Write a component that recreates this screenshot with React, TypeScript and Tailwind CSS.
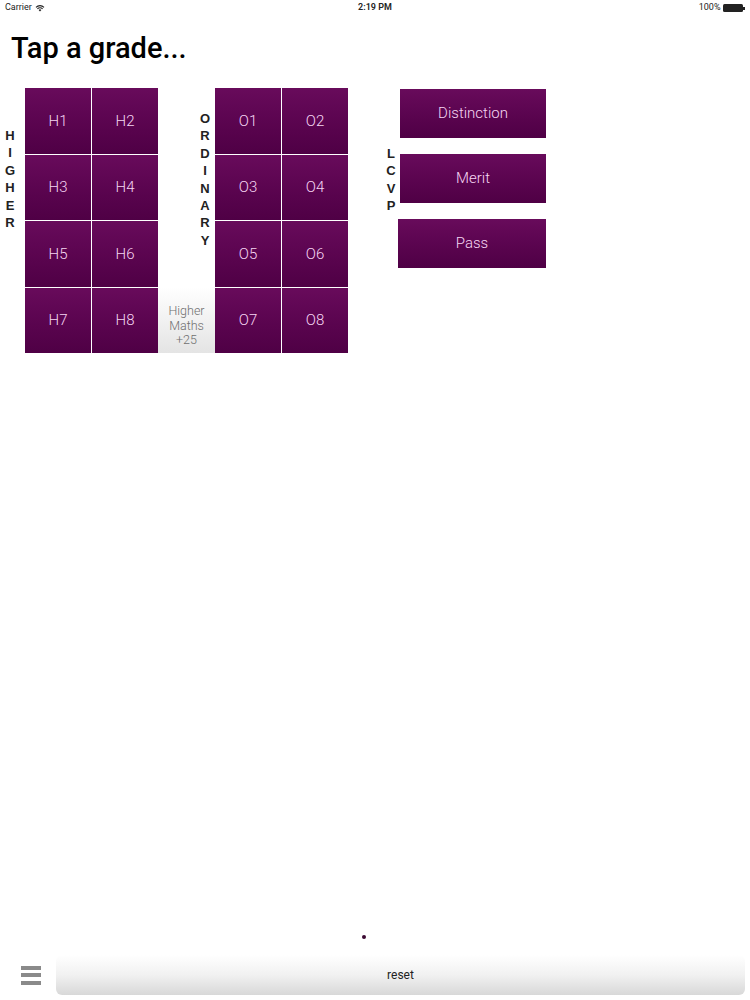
import React from 'react';

const higher = ['H1', 'H2', 'H3', 'H4', 'H5', 'H6', 'H7', 'H8'];
const ordinary = ['O1', 'O2', 'O3', 'O4', 'O5', 'O6', 'O7', 'O8'];

const Cell: React.FC<{ label: string }> = ({ label }) => (
  <div className="h-[65.5px] flex items-center justify-center bg-gradient-to-b from-[#680b5b] to-[#4f0045] text-[#f6d6f3] text-[15px] font-light">
    {label}
  </div>
);

const Vertical: React.FC<{ word: string }> = ({ word }) => (
  <div
    className="flex flex-col items-center text-[13px] font-bold leading-[17.4px] text-[#222]"
    style={{ fontFamily: '"Liberation Sans", Arial, sans-serif' }}
  >
    {word.split('').map((ch, i) => (
      <span key={i}>{ch}</span>
    ))}
  </div>
);

export default function App() {
  return (
    <div
      className="min-h-[1000px] w-[750px] bg-white flex flex-col"
      style={{ fontFamily: 'Roboto, "Liberation Sans", sans-serif' }}
    >
      {/* status bar */}
      <div className="h-[16px] px-[5px] flex items-center justify-between text-[9px] text-[#222]">
        <div className="flex items-center gap-[3px] w-[120px]">
          <span>Carrier</span>
          <svg width="10" height="8" viewBox="0 0 10 8">
            <path d="M5 7.5 L3.6 6 A2 2 0 0 1 6.4 6 Z" fill="#222" />
            <path d="M2.4 4.8 A3.6 3.6 0 0 1 7.6 4.8" stroke="#222" strokeWidth="1.1" fill="none" />
            <path d="M1 3.3 A5.6 5.6 0 0 1 9 3.3" stroke="#222" strokeWidth="1.1" fill="none" />
          </svg>
        </div>
        <span className="font-semibold">2:19 PM</span>
        <div className="flex items-center justify-end gap-[3px] w-[120px]">
          <span>100%</span>
          <div className="flex items-center">
            <div className="w-[20px] h-[8px] bg-[#222] rounded-[1.5px]" />
            <div className="w-[1.5px] h-[3px] bg-[#222]" />
          </div>
        </div>
      </div>

      <h1 className="pl-[11px] mt-[16px] text-[29px] font-medium leading-[32px] text-black">
        Tap a grade...
      </h1>

      <div className="flex items-start mt-[24px]">
        <div className="w-[25px] pt-[39px] pr-[5px] flex justify-center">
          <Vertical word="HIGHER" />
        </div>

        <div className="w-[133px] grid grid-cols-2 gap-px bg-white">
          {higher.map((g) => (
            <Cell key={g} label={g} />
          ))}
        </div>

        <div className="w-[57px] h-[265px] flex flex-col">
          <div className="pt-[22px] pl-[36px] w-[58px] flex justify-center">
            <Vertical word="ORDINARY" />
          </div>
          <div className="mt-auto h-[66px] pt-[12px] flex flex-col items-center justify-center bg-gradient-to-b from-white to-[#e4e4e4] text-[#6f6f6f] text-[12.5px] font-light leading-[14.5px]">
            <span>Higher</span>
            <span>Maths</span>
            <span>+25</span>
          </div>
        </div>

        <div className="w-[133px] grid grid-cols-2 gap-px bg-white">
          {ordinary.map((g) => (
            <Cell key={g} label={g} />
          ))}
        </div>

        <div className="w-[52px] pt-[57px] pl-[34px] flex justify-center">
          <Vertical word="LCVP" />
        </div>

        <div className="flex flex-col gap-[16px] pt-[1px]">
          {['Distinction', 'Merit', 'Pass'].map((b) => (
            <div
              key={b}
              className={`h-[49px] flex items-center justify-center bg-gradient-to-b from-[#680b5b] to-[#4f0045] text-[#f6d6f3] text-[15px] font-light ${
                b === 'Pass' ? 'w-[148px] -ml-[2px]' : 'w-[146px]'
              }`}
            >
              {b}
            </div>
          ))}
        </div>
      </div>

      <div className="flex-1" />

      <div className="flex justify-center mb-[16px]">
        <div className="ml-[-22px] w-[4px] h-[4px] rounded-full bg-[#3b0a32]" />
      </div>

      <div className="flex items-center h-[40px] mb-[5px]">
        <div className="w-[56px] flex flex-col items-center gap-[3.5px] pl-[6px]">
          <div className="w-[20px] h-[4px] bg-[#8a8a8a]" />
          <div className="w-[20px] h-[4px] bg-[#8a8a8a]" />
          <div className="w-[20px] h-[4px] bg-[#8a8a8a]" />
        </div>
        <div className="w-[689px] h-[40px] flex items-center justify-center rounded-[6px] bg-gradient-to-b from-white via-[#f1f1f1] to-[#d8d8d8] text-[12px] text-[#222]">
          reset
        </div>
      </div>
    </div>
  );
}
